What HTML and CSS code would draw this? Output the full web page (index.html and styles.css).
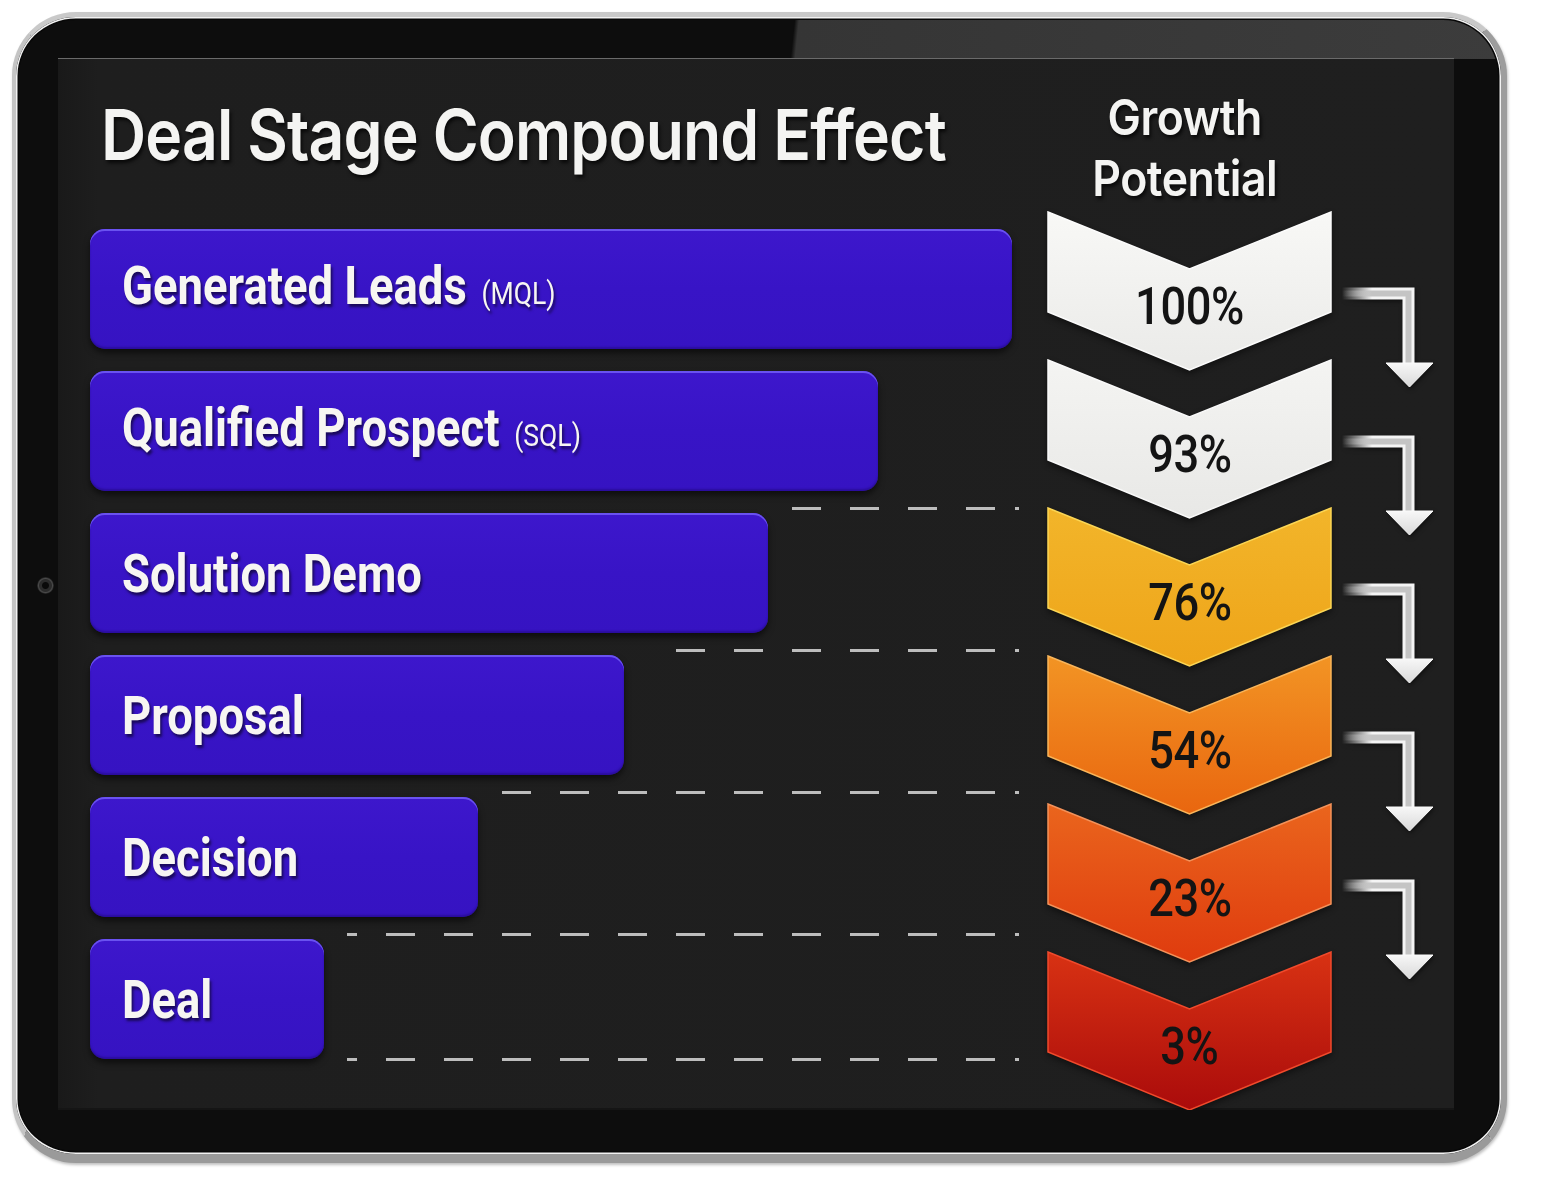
FILE: index.html
```html
<!DOCTYPE html>
<html lang="en">
<head>
<meta charset="utf-8">
<title>Deal Stage Compound Effect</title>
<link rel="stylesheet" href="styles.css">
</head>
<body>
<div class="tablet">
  <span class="camera"></span>
  <div class="screen">
    <section class="stages">
      <h1 class="title"><span class="sx">Deal Stage Compound Effect</span></h1>
      <div class="rows">
        <div class="row">
          <div class="bar" style="width:922px"><span class="label">Generated Leads <small>(MQL)</small></span></div>
        </div>
        <div class="row">
          <div class="bar" style="width:788px"><span class="label">Qualified Prospect <small>(SQL)</small></span></div>
        </div>
        <div class="row">
          <div class="bar" style="width:678px"><span class="label">Solution Demo</span></div>
          <div class="lead"><div class="dash"></div></div>
        </div>
        <div class="row">
          <div class="bar" style="width:534px"><span class="label">Proposal</span></div>
          <div class="lead"><div class="dash"></div></div>
        </div>
        <div class="row">
          <div class="bar" style="width:388px"><span class="label">Decision</span></div>
          <div class="lead"><div class="dash"></div></div>
        </div>
        <div class="row">
          <div class="bar" style="width:234px"><span class="label">Deal</span></div>
          <div class="lead"><div class="dash"></div><div class="dash dash-bottom"></div></div>
        </div>
      </div>
    </section>
    <section class="growth">
      <h2 class="gtitle"><span class="sx">Growth<br>Potential</span></h2>
      <div class="chevrons">
        <div class="crow">
          <div class="chev c1">
            <svg viewBox="0 0 285 160" width="285" height="160"><defs><linearGradient id="g1" x1="0" y1="0" x2="0" y2="1"><stop offset="0" stop-color="#f8f8f6"/><stop offset="1" stop-color="#eaeae8"/></linearGradient></defs><polygon points="1,1 142.5,58 284,1 284,101 142.5,159 1,101" fill="url(#g1)" stroke="#fcfcfc" stroke-width="1.5"/></svg>
            <span class="pct"><span class="sx">100%</span></span>
          </div>
          <svg class="arrow" viewBox="0 0 100 180" width="100" height="180"><use href="#elbow"/></svg>
        </div>
        <div class="crow">
          <div class="chev">
            <svg viewBox="0 0 285 160" width="285" height="160"><defs><linearGradient id="g2" x1="0" y1="0" x2="0" y2="1"><stop offset="0" stop-color="#f4f4f2"/><stop offset="1" stop-color="#e8e8e6"/></linearGradient></defs><polygon points="1,1 142.5,58 284,1 284,101 142.5,159 1,101" fill="url(#g2)" stroke="#fafafa" stroke-width="1.5"/></svg>
            <span class="pct"><span class="sx">93%</span></span>
          </div>
          <svg class="arrow" viewBox="0 0 100 180" width="100" height="180"><use href="#elbow"/></svg>
        </div>
        <div class="crow">
          <div class="chev">
            <svg viewBox="0 0 285 160" width="285" height="160"><defs><linearGradient id="g3" x1="0" y1="0" x2="0" y2="1"><stop offset="0" stop-color="#f2b52a"/><stop offset="1" stop-color="#eea419"/></linearGradient></defs><polygon points="1,1 142.5,58 284,1 284,101 142.5,159 1,101" fill="url(#g3)" stroke="#fbd655" stroke-width="1.5"/></svg>
            <span class="pct"><span class="sx">76%</span></span>
          </div>
          <svg class="arrow" viewBox="0 0 100 180" width="100" height="180"><use href="#elbow"/></svg>
        </div>
        <div class="crow">
          <div class="chev">
            <svg viewBox="0 0 285 160" width="285" height="160"><defs><linearGradient id="g4" x1="0" y1="0" x2="0" y2="1"><stop offset="0" stop-color="#f29424"/><stop offset="1" stop-color="#e9660f"/></linearGradient></defs><polygon points="1,1 142.5,58 284,1 284,101 142.5,159 1,101" fill="url(#g4)" stroke="#f9b55a" stroke-width="1.5"/></svg>
            <span class="pct"><span class="sx">54%</span></span>
          </div>
          <svg class="arrow" viewBox="0 0 100 180" width="100" height="180"><use href="#elbow"/></svg>
        </div>
        <div class="crow">
          <div class="chev">
            <svg viewBox="0 0 285 160" width="285" height="160"><defs><linearGradient id="g5" x1="0" y1="0" x2="0" y2="1"><stop offset="0" stop-color="#ea651d"/><stop offset="1" stop-color="#df3b0e"/></linearGradient></defs><polygon points="1,1 142.5,58 284,1 284,101 142.5,159 1,101" fill="url(#g5)" stroke="#f3925a" stroke-width="1.5"/></svg>
            <span class="pct"><span class="sx">23%</span></span>
          </div>
          <svg class="arrow" viewBox="0 0 100 180" width="100" height="180"><use href="#elbow"/></svg>
        </div>
        <div class="crow">
          <div class="chev">
            <svg viewBox="0 0 285 160" width="285" height="160"><defs><linearGradient id="g6" x1="0" y1="0" x2="0" y2="1"><stop offset="0" stop-color="#d83213"/><stop offset="1" stop-color="#aa0b0b"/></linearGradient></defs><polygon points="1,1 142.5,58 284,1 284,101 142.5,159 1,101" fill="url(#g6)" stroke="#f04a2c" stroke-width="1.5"/></svg>
            <span class="pct"><span class="sx">3%</span></span>
          </div>
        </div>
      </div>
    </section>
  </div>
</div>
<svg class="defs" width="0" height="0" aria-hidden="true">
  <defs>
    <linearGradient id="fade" gradientUnits="userSpaceOnUse" x1="4" y1="0" x2="34" y2="0">
      <stop offset="0" stop-color="#f4f4f4" stop-opacity="0"/>
      <stop offset="1" stop-color="#f4f4f4" stop-opacity="1"/>
    </linearGradient>
    <linearGradient id="fadein" gradientUnits="userSpaceOnUse" x1="4" y1="0" x2="34" y2="0">
      <stop offset="0" stop-color="#bdbdbd" stop-opacity="0"/>
      <stop offset="1" stop-color="#c4c4c4" stop-opacity="1"/>
    </linearGradient>
    <linearGradient id="head" x1="0" y1="0" x2="0" y2="1">
      <stop offset="0" stop-color="#f7f7f7"/>
      <stop offset="1" stop-color="#d9d9d9"/>
    </linearGradient>
    <g id="elbow">
      <path d="M4 82.5 H70.5 V154" fill="none" stroke="url(#fade)" stroke-width="12"/>
      <path d="M4 82.5 H70.5 V154" fill="none" stroke="url(#fadein)" stroke-width="6"/>
      <polygon points="48,152 95,152 71.5,176" fill="url(#head)" stroke="#fafafa" stroke-width="1"/>
    </g>
  </defs>
</svg>
</body>
</html>
```

FILE: styles.css
```css
* { box-sizing: border-box; }

html, body {
  margin: 0;
  padding: 0;
  background: #ffffff;
}

body {
  width: 1543px;
  height: 1190px;
  overflow: hidden;
  font-family: "Inter", "Roboto", sans-serif;
}

.defs {
  position: absolute;
  width: 0;
  height: 0;
}

.tablet {
  position: relative;
  margin: 12px 0 0 12px;
  width: 1495px;
  height: 1151px;
  border-style: solid;
  border-width: 5px 6px 9px 4px;
  border-color: #c9c9c9 #9d9d9d #9a9a9a #c4c4c4;
  border-radius: 64px;
  padding: 41px 47px 44px 42px;
  background:
    linear-gradient(96deg, #0d0d0d 0 52.3%, #353535 52.6%, #3c3c3c 100%) left top / 100% 42px no-repeat,
    #0d0d0d;
  box-shadow:
    inset 0 0 0 1.5px #f2f2f2,
    inset 0 0 0 3px #080808,
    1px 2px 3px rgba(0, 0, 0, 0.25);
}

.camera {
  position: absolute;
  left: 21px;
  top: 560px;
  width: 17px;
  height: 17px;
  border-radius: 50%;
  background: radial-gradient(circle, #0a0a0a 0 3px, #2b2b2b 4px 6px, #4a4a4a 7px, #1a1a1a 8.5px);
}

.screen {
  width: 1396px;
  height: 1052px;
  display: grid;
  grid-template-columns: 989px 1fr;
  background: linear-gradient(90deg, #191919 0, #1e1e1e 40px, #1f1f1f 100%);
  border-top: 1px solid #6a6a6a;
  box-shadow: inset 0 -2px 0 #151515;
  overflow: hidden;
}

.sx {
  display: inline-block;
}

/* ---------- left column ---------- */
.stages {
  padding: 41px 28px 0 32px;
  display: flex;
  flex-direction: column;
}

.title {
  margin: 0 0 59px 11px;
  font-family: "Inter", sans-serif;
  font-weight: 600;
  font-size: 70px;
  line-height: 70px;
  color: #f4f4f2;
  letter-spacing: -1px;
  white-space: nowrap;
  text-shadow: 2px 3px 4px rgba(0, 0, 0, 0.7);
}

.title .sx {
  transform: scaleX(0.893);
  transform-origin: left center;
}

.rows {
  display: flex;
  flex-direction: column;
  gap: 22px;
}

.row {
  display: flex;
  height: 120px;
}

.bar {
  flex: none;
  height: 120px;
  border-radius: 15px;
  background: linear-gradient(180deg, #3d17cc 0, #3814c6 50%, #3613c2 100%);
  box-shadow:
    inset 0 2px 0 #6a52f0,
    inset 0 -2px 2px rgba(20, 0, 90, 0.35),
    0 4px 6px rgba(0, 0, 0, 0.55);
  display: flex;
  align-items: center;
  padding-left: 32px;
  white-space: nowrap;
}

.label {
  display: inline-block;
  font-family: "Roboto", "Liberation Sans", sans-serif;
  font-weight: 700;
  font-size: 53px;
  line-height: 60px;
  color: #f7f6f2;
  transform: scaleX(0.857);
  transform-origin: left center;
  text-shadow: 2px 3px 3px rgba(0, 0, 0, 0.55);
  margin-top: 1px;
}

.label small {
  font-weight: 400;
  font-size: 31px;
  margin-left: 4px;
}

.lead {
  flex: 1;
  margin-left: 23px;
  display: flex;
  flex-direction: column;
  justify-content: space-between;
}

.dash {
  height: 3px;
  margin-top: -6px;
  background:
    linear-gradient(#bdbdbd, #bdbdbd) right center / 4px 3px no-repeat,
    linear-gradient(90deg, transparent 0 29px, #bdbdbd 29px 58px) right 24px center / 58px 3px repeat-x;
}

.dash-bottom {
  margin-top: 0;
  margin-bottom: -2px;
}

/* ---------- right column ---------- */
.growth {
  padding-top: 28px;
  display: flex;
  flex-direction: column;
}

.gtitle {
  margin: 0 0 2px 0;
  width: 285px;
  padding-right: 10px;
  text-align: center;
  font-family: "Inter", sans-serif;
  font-weight: 600;
  font-size: 49px;
  line-height: 61px;
  color: #f4f4f2;
  letter-spacing: -0.5px;
  text-shadow: 2px 3px 4px rgba(0, 0, 0, 0.7);
}

.gtitle .sx {
  transform: scaleX(0.91);
  transform-origin: center;
}

.chevrons {
  display: flex;
  flex-direction: column;
}

.crow {
  display: flex;
  height: 160px;
}

.crow + .crow {
  margin-top: -12px;
}

.chev {
  width: 285px;
  height: 160px;
  display: grid;
  flex: none;
  filter: drop-shadow(0 3px 3px rgba(0, 0, 0, 0.45));
}

.chev > svg,
.chev > .pct {
  grid-area: 1 / 1;
}

.chev > svg {
  display: block;
}

.pct {
  padding-top: 70px;
  text-align: center;
  font-family: "Roboto", "Liberation Sans", sans-serif;
  font-weight: 500;
  font-size: 52px;
  line-height: 52px;
  color: #141414;
  letter-spacing: -0.5px;
}

.pct .sx {
  transform: scaleX(0.87);
  transform-origin: center;
}

.arrow {
  flex: none;
  margin-left: 6px;
  overflow: visible;
  filter: drop-shadow(1px 2px 2px rgba(0, 0, 0, 0.5));
}
```
